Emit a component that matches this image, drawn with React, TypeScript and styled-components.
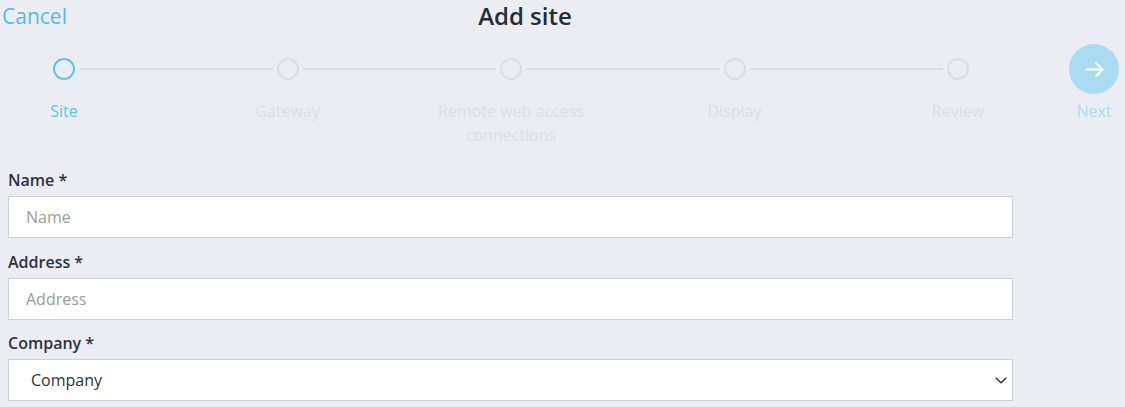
import React, { FC } from 'react';
import styled, { createGlobalStyle } from 'styled-components';

const GlobalStyle = createGlobalStyle`
  html, body {
    margin: 0;
    padding: 0;
    background: #ecedf2;
  }
  body {
    font-family: 'Open Sans', 'Noto Sans', sans-serif;
    color: #2b3340;
  }
  * {
    box-sizing: border-box;
  }
`;

type StepData = {
  label: string;
  active?: boolean;
};

const steps: StepData[] = [
  { label: 'Site', active: true },
  { label: 'Gateway' },
  { label: 'Remote web access connections' },
  { label: 'Display' },
  { label: 'Review' },
];

const fields = [
  { label: 'Name *', placeholder: 'Name' },
  { label: 'Address *', placeholder: 'Address' },
];

const App: FC = () => {
  return (
    <Page>
      <GlobalStyle />
      <Header>
        <CancelLink>Cancel</CancelLink>
        <Title>Add site</Title>
      </Header>

      <Stepper>
        {steps.map((step, i) => (
          <React.Fragment key={step.label}>
            {i > 0 && <Connector />}
            <Step>
              <CircleCell>
                <Circle $active={step.active} />
              </CircleCell>
              <StepLabel $active={step.active}>{step.label}</StepLabel>
            </Step>
          </React.Fragment>
        ))}
        <Spacer />
        <NextStep>
          <CircleCell>
            <NextButton type="button" aria-label="Next">
              <svg width="19" height="17" viewBox="0 0 19 17" fill="none">
                <path d="M0.5 8.5H17.5" stroke="#fff" strokeWidth="2" />
                <path d="M10.5 1.3L17.6 8.5L10.5 15.7" stroke="#fff" strokeWidth="2" />
              </svg>
            </NextButton>
          </CircleCell>
          <NextLabel>Next</NextLabel>
        </NextStep>
      </Stepper>

      <Form>
        {fields.map((f) => (
          <Field key={f.label}>
            <FieldLabel>{f.label}</FieldLabel>
            <TextInput placeholder={f.placeholder} />
          </Field>
        ))}
        <Field>
          <FieldLabel>Company *</FieldLabel>
          <SelectWrap>
            <Select defaultValue="">
              <option value="">Company</option>
            </Select>
            <Chevron width="12" height="7" viewBox="0 0 12 7" fill="none">
              <path d="M0.7 0.8L6 5.8L11.3 0.8" stroke="#2b3340" strokeWidth="1.4" />
            </Chevron>
          </SelectWrap>
        </Field>
      </Form>
    </Page>
  );
};

export default App;

const Page = styled.div`
  width: 1125px;
  min-height: 407px;
  background: #ecedf2;
  overflow: hidden;
`;

const Header = styled.div`
  display: flex;
  align-items: flex-start;
  height: 34px;
  padding-left: 2px;
`;

const CancelLink = styled.span`
  font-size: 21px;
  line-height: 28px;
  margin-top: 2px;
  color: #4dbde8;
  cursor: pointer;
`;

const Title = styled.h1`
  flex: 1;
  margin: 0;
  padding-right: 142px;
  text-align: center;
  font-size: 24px;
  line-height: 32px;
  font-weight: 600;
  color: #252d38;
`;

const Stepper = styled.div`
  display: flex;
  align-items: flex-start;
  margin-top: 10px;
  padding-left: 53px;
  width: 1119px;
`;

const Step = styled.div`
  flex: 0 0 22px;
  width: 22px;
  display: flex;
  flex-direction: column;
  align-items: center;
`;

const CircleCell = styled.div`
  height: 50px;
  display: flex;
  align-items: center;
  justify-content: center;
`;

const Circle = styled.div<{ $active?: boolean }>`
  width: 22px;
  height: 22px;
  border-radius: 50%;
  border: 2px solid ${(p) => (p.$active ? '#5cc4ea' : '#dcdee4')};
`;

const StepLabel = styled.div<{ $active?: boolean }>`
  flex-shrink: 0;
  width: 170px;
  margin-top: 5px;
  text-align: center;
  font-size: 16px;
  line-height: 24px;
  color: ${(p) => (p.$active ? '#5cc4ea' : '#dcdfe5')};
`;

const Connector = styled.div`
  flex: 1;
  height: 2px;
  margin: 24px 4px 0;
  background: #dcdee3;
`;

const Spacer = styled.div`
  flex: 0 0 100px;
`;

const NextStep = styled.div`
  flex: 0 0 50px;
  display: flex;
  flex-direction: column;
  align-items: center;
`;

const NextButton = styled.button`
  width: 50px;
  height: 50px;
  border-radius: 50%;
  border: none;
  padding: 0;
  background: #a9dcf0;
  display: flex;
  align-items: center;
  justify-content: center;
  cursor: pointer;
`;

const NextLabel = styled.div`
  margin-top: 5px;
  font-size: 16px;
  line-height: 24px;
  color: #a9dcf0;
`;

const Form = styled.div`
  display: flex;
  flex-direction: column;
  gap: 12.5px;
  width: 1013px;
  margin-top: 22px;
  padding-left: 8px;
`;

const Field = styled.div`
  display: flex;
  flex-direction: column;
  gap: 5px;
`;

const FieldLabel = styled.label`
  font-size: 16px;
  line-height: 22px;
  font-weight: 600;
  color: #2b3340;
`;

const TextInput = styled.input`
  height: 42px;
  width: 100%;
  border: 1px solid #cfd0d3;
  background: #fff;
  padding: 0 17px;
  font-family: inherit;
  font-size: 16px;
  color: #2b3340;
  outline: none;

  &::placeholder {
    color: #9b9b9b;
  }
`;

const SelectWrap = styled.div`
  position: relative;
  height: 42px;
`;

const Select = styled.select`
  appearance: none;
  width: 100%;
  height: 42px;
  border: 1px solid #cfd0d3;
  border-radius: 0;
  background: #fff;
  padding: 0 30px 0 22px;
  font-family: inherit;
  font-size: 16px;
  color: #2b3340;
  outline: none;
`;

const Chevron = styled.svg`
  position: absolute;
  right: 6px;
  top: 18px;
  pointer-events: none;
`;
